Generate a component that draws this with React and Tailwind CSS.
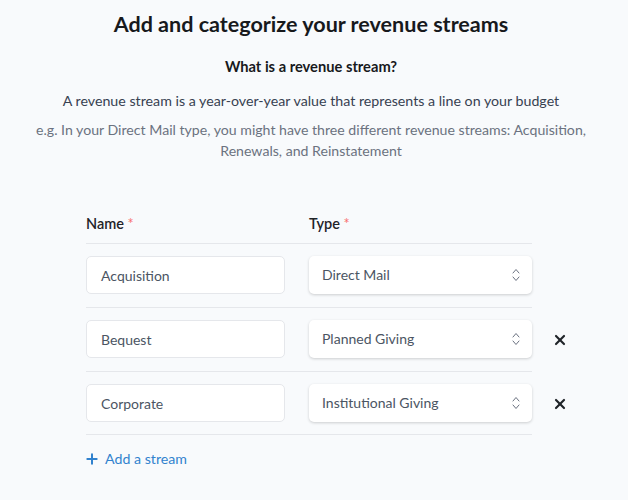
import React from "react";
import { Plus, X } from "lucide-react";

const rows = [
  { name: "Acquisition", type: "Direct Mail", removable: false },
  { name: "Bequest", type: "Planned Giving", removable: true },
  { name: "Corporate", type: "Institutional Giving", removable: true },
];

function Updown() {
  return (
    <svg width="8" height="14" viewBox="0 0 8 14" fill="none" stroke="#6b7280" strokeWidth="1" strokeLinecap="round" strokeLinejoin="round">
      <path d="M1 5l3-3.5L7 5" />
      <path d="M1 9l3 3.5L7 9" />
    </svg>
  );
}

export default function App() {
  return (
    <div className="min-h-[500px] bg-[#f8fafc] text-[14px] font-['Lato','Noto_Sans',sans-serif] text-[#1f2328]">
      <div className="flex w-[622px] flex-col items-center text-center pt-[10px]">
        <h1 className="text-[21.55px] leading-[28px] font-bold text-[#17191c]">Add and categorize your revenue streams</h1>
        <h2 className="mt-[18px] text-[14.7px] leading-[21px] font-bold text-[#17191c]">What is a revenue stream?</h2>
        <p className="mt-[13px] text-[14.23px] leading-[21px] text-[#374151]">A revenue stream is a year-over-year value that represents a line on your budget</p>
        <p className="mt-[8px] w-[570px] text-[14.13px] leading-[21px] text-[#6b7280]">e.g. In your Direct Mail type, you might have three different revenue streams: Acquisition, Renewals, and Reinstatement</p>
      </div>
      <div className="ml-[86px] mt-[42px] w-[446px]">
        <div className="flex h-[41px] gap-[24px] border-b border-[#e5e7eb] pt-[10px] text-[14.5px] leading-[21px] font-semibold text-[#1f2328]">
          <div className="w-[199px]">Name <span className="text-[#f87171] font-normal">*</span></div>
          <div className="w-[223px]">Type <span className="text-[#f87171] font-normal">*</span></div>
        </div>
        {rows.map((r, i) => (
          <div key={r.name} className={`relative flex items-center gap-[24px] border-b border-[#e5e7eb] ${i === 2 ? "h-[63px]" : "h-[64px] pb-[1px]"}`}>
            <div className="flex h-[38px] w-[199px] items-center rounded-[5px] border border-[#e5e7eb] bg-white px-[14px] text-[#4b5563] leading-[21px]">{r.name}</div>
            <div className="flex h-[38px] w-[223px] items-center justify-between rounded-[5px] bg-white pl-[13px] pr-[12px] pb-[2px] text-[#4b5563] leading-[21px] shadow-[0_1px_3px_rgba(0,0,0,0.18)]">
              <span>{r.type}</span>
              <span className="mt-[2px]"><Updown /></span>
            </div>
            {r.removable && (
              <X className="absolute left-[466px] top-[24px] text-[#1f2328]" size={16} strokeWidth={3.2} />
            )}
          </div>
        ))}
        <div className="mt-[13px] flex items-center gap-[5px] text-[14.2px] text-[#3182ce] leading-[21px]">
          <Plus size={16} strokeWidth={3} className="-ml-[2px] text-[#3182ce]" />
          <span>Add a stream</span>
        </div>
      </div>
    </div>
  );
}
